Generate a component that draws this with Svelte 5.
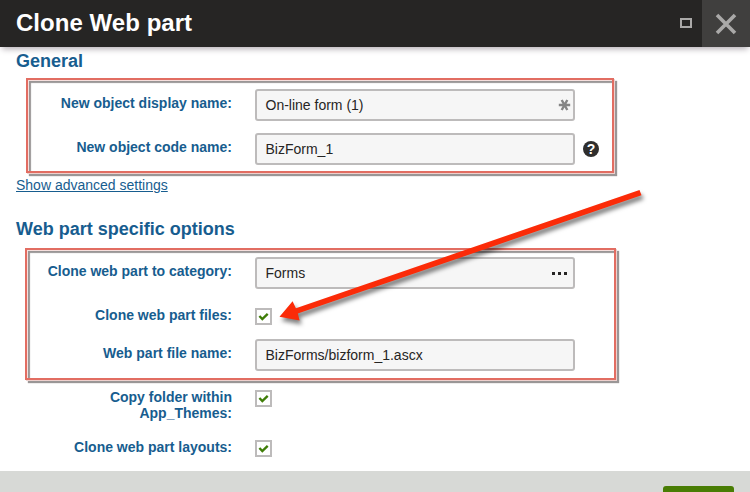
<script>
  const general = [
    { label: 'New object display name:', value: 'On-line form (1)', icon: 'required' },
    { label: 'New object code name:', value: 'BizForm_1', icon: 'help' }
  ];
</script>

{#snippet checkbox()}
  <span class="check" role="checkbox" aria-checked="true" tabindex="0">
    <svg width="17" height="17" viewBox="0 0 17 17"><path d="M4.4 8 7.3 11 12.7 5.8" fill="none" stroke="#3f7d08" stroke-width="2.4" /></svg>
  </span>
{/snippet}

<div class="dialog">
  <header>
    <h1>Clone Web part</h1>
    <button class="max" aria-label="Maximize"><span></span></button>
    <button class="close" aria-label="Close">
      <svg width="24" height="24" viewBox="0 0 24 24"><path d="M3 3 21 21M21 3 3 21" stroke="#aaa9a8" stroke-width="3.6" /></svg>
    </button>
  </header>

  <main>
    <h2>General</h2>
    <section class="group first">
      {#each general as row}
        <div class="row">
          <div class="label"><span>{row.label}</span></div>
          <div class="field">
            <span>{row.value}</span>
            {#if row.icon === 'required'}
              <svg class="star" width="14" height="14" viewBox="0 0 14 14"><path d="M1.8 7H13.2M4.7 2 10.3 12M10.3 2 4.7 12" stroke="#858585" stroke-width="2.4" /></svg>
            {/if}
          </div>
          {#if row.icon === 'help'}
            <span class="help">?</span>
          {/if}
        </div>
      {/each}
    </section>
    <a href="#advanced">Show advanced settings</a>

    <h2 class="specific">Web part specific options</h2>
    <section class="group second">
      <div class="row">
        <div class="label"><span>Clone web part to category:</span></div>
        <div class="field"><span>Forms</span><span class="dots"><i></i><i></i><i></i></span></div>
      </div>
      <div class="row checks">
        <div class="label"><span>Clone web part files:</span></div>
        {@render checkbox()}
      </div>
      <div class="row file">
        <div class="label"><span>Web part file name:</span></div>
        <div class="field"><span>BizForms/bizform_1.ascx</span></div>
      </div>
    </section>
    <div class="row copy">
      <div class="label"><span>Copy folder within<br />App_Themes:</span></div>
      {@render checkbox()}
    </div>
    <div class="row layouts">
      <div class="label"><span>Clone web part layouts:</span></div>
      {@render checkbox()}
    </div>
  </main>

  <footer><button class="primary" aria-label="Clone"></button></footer>

  <svg class="arrow" width="750" height="492" viewBox="0 0 750 492">
    <path d="M639.5 190 641.5 195.3 297.8 313.6 299.6 320.6 279.5 316.7 292.6 301.3 295.9 308.2Z" fill="#fb2b08" />
  </svg>
</div>

<style>
  .dialog {
    position: relative;
    width: 750px;
    height: 492px;
    overflow: hidden;
    display: flex;
    flex-direction: column;
    background: #fff;
    font-family: "Liberation Sans", Arial, sans-serif;
    font-size: 14px;
    color: #262524;
  }
  header {
    height: 47px;
    flex: none;
    display: flex;
    align-items: stretch;
    background: #262524;
    box-shadow: 0 4px 6px -2px #b4aeb4;
  }
  h1 {
    flex: 1;
    margin: 0;
    padding-left: 16px;
    font-size: 24px;
    line-height: 46px;
    letter-spacing: 0.04px;
    color: #fff;
  }
  button {
    border: 0;
    padding: 0;
    background: none;
    display: flex;
    align-items: center;
    justify-content: center;
  }
  .max { width: 32px; }
  .max span { width: 8px; height: 6px; border: 2px solid #aaa9a8; margin-top: -1px; }
  .close { width: 48px; background: #403f3e; }
  main {
    flex: 1;
    min-height: 0;
    display: flex;
    flex-direction: column;
    align-items: flex-start;
  }
  h2 {
    margin: 4px 0 0 16px;
    height: 21px;
    font-size: 18px;
    line-height: 21px;
    color: #175d8f;
    white-space: nowrap;
  }
  .group {
    box-sizing: border-box;
    flex: none;
    border: 2px solid #e26d62;
    box-shadow: 1px 1px 0 #eed0cd, 3px 3px 1px #9a9696, inset 1px 1px 0 #f6dfdd, inset 3px 3px 1px #9a9696;
  }
  .first { margin: 6px 0 0 26px; width: 588px; height: 95px; padding-top: 9px; }
  .second { margin: 8px 0 0 25px; width: 591px; height: 132px; padding-top: 7px; }
  .row { display: flex; align-items: flex-start; }
  .first .row { height: 32px; margin-bottom: 12px; }
  .first .label { width: 204px; margin-right: 23px; }
  .second .label { width: 205px; margin-right: 23px; }
  .label {
    flex: none;
    display: flex;
    justify-content: flex-end;
    padding-top: 6px;
    font-weight: bold;
    line-height: 16px;
    text-align: right;
    color: #175d8f;
    white-space: nowrap;
  }
  .field {
    box-sizing: border-box;
    width: 320px;
    height: 32px;
    flex: none;
    display: flex;
    align-items: center;
    justify-content: space-between;
    padding: 0 2px 0 8.5px;
    border: 2px solid #bdbbbb;
    border-radius: 3px;
    background: #f6f6f6;
  }
  .dots { display: flex; gap: 3px; margin-right: 4px; }
  .dots i { width: 3px; height: 3px; background: #262524; }
  .help {
    width: 16px;
    height: 16px;
    margin: 8px 0 0 8px;
    border-radius: 50%;
    background: #2f2e2d;
    color: #fff;
    font-size: 14px;
    font-weight: bold;
    line-height: 16px;
    text-align: center;
  }
  a {
    margin: 4px 0 0 16px;
    height: 17px;
    line-height: 17px;
    color: #175d8f;
  }
  .specific { margin-top: 25px; }
  .checks { margin-top: 19px; height: 17px; }
  .checks .label, .layouts .label, .copy .label { padding-top: 0; }
  .checks .label { margin-top: -1px; }
  .file { margin-top: 14px; }
  .check {
    box-sizing: border-box;
    width: 17px;
    height: 17px;
    flex: none;
    border: 2px solid #bdbbbb;
  }
  .check svg { display: block; margin: -2px; }
  .copy { margin-top: 10px; height: 34px; }
  .layouts { margin-top: 16px; }
  .copy .label, .layouts .label { width: 232px; margin-right: 23px; margin-top: -1px; }
  footer {
    height: 21px;
    flex: none;
    display: flex;
    justify-content: flex-end;
    background: #d7d9d6;
  }
  .primary {
    width: 71px;
    height: 32px;
    margin: 15px 16px 0 0;
    border-radius: 3px;
    background: #497d04;
  }
  .arrow {
    position: absolute;
    inset: 0;
    pointer-events: none;
    filter: drop-shadow(2px 4px 2px rgba(0, 0, 0, 0.5));
  }
</style>
